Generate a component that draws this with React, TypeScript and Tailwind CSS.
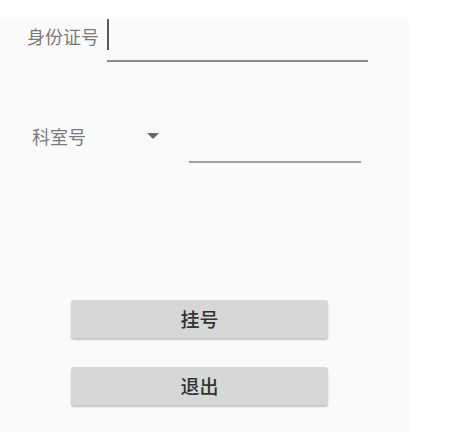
import React from 'react';

const font = { fontFamily: '"Noto Sans CJK SC", "Noto Sans", sans-serif' };

const ActionButton = ({ label }: { label: string }) => (
  <button className="ml-[71px] w-[257px] h-[38px] rounded-[3px] bg-[#d6d7d7] shadow-[0_2px_2px_rgba(0,0,0,0.22)] text-[19px] leading-[38px] font-medium text-[#333]">
    {label}
  </button>
);

export default function App() {
  return (
    <div className="w-[457px] h-[437px] bg-white pt-[19px]" style={font}>
      <div className="w-[409px] h-[413px] bg-[#fafafa] flex flex-col">
        {/* ID number row */}
        <div className="flex items-start">
          <div className="w-[107px] pl-[27px] mt-[7px] text-[18px] leading-[20px] text-[#7a7a7a] whitespace-nowrap">
            身份证号
          </div>
          <div className="flex flex-col">
            <div className="w-[2px] h-[31px] bg-[#5a5a5a]" />
            <div className="mt-[10px] w-[261px] h-[2px] bg-[#8c8c8c]" />
          </div>
        </div>

        {/* department row */}
        <div className="flex items-start mt-[64px]">
          <div className="w-[147px] pl-[32px] text-[18px] leading-[20px] text-[#7a7a7a] whitespace-nowrap">
            科室号
          </div>
          <div className="mt-[7px] w-0 h-0 border-l-[6px] border-r-[6px] border-t-[6px] border-l-transparent border-r-transparent border-t-[#666]" />
          <div className="ml-[30px] mt-[35px] w-[172px] h-[2px] bg-[#a0a0a0]" />
        </div>

        <div className="mt-[137px] flex flex-col gap-[29px]">
          <ActionButton label="挂号" />
          <ActionButton label="退出" />
        </div>
      </div>
    </div>
  );
}
